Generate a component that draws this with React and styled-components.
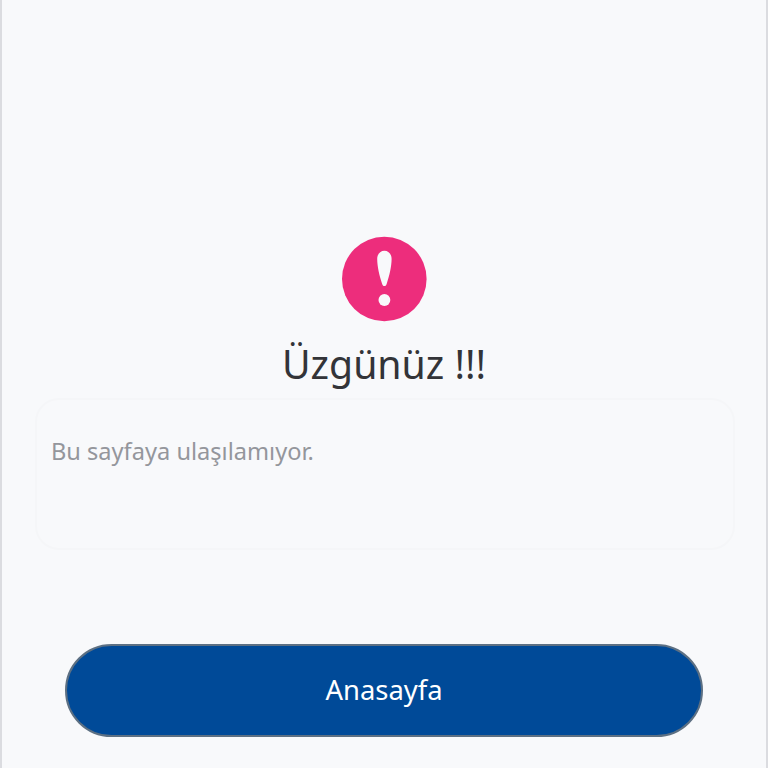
import React from "react";
import styled, { createGlobalStyle } from "styled-components";

const NotFound = () => {
  return (
    <>
      <GlobalStyle />
      <Container>
        <Icon viewBox="0 0 86 86">
          <circle cx="43.3" cy="43" r="42.3" fill="#ed2d7c" />
          <path
            d="M43.4 14.8C47.4 14.8 50.6 18 50.6 23C50.6 30.2 48.3 40.2 45.8 47.4C45.2 49.2 44.6 50 43.4 50C42.2 50 41.6 49.2 41 47.4C38.5 40.2 36.2 30.2 36.2 23C36.2 18 39.4 14.8 43.4 14.8Z"
            fill="#f8f9fb"
          />
          <circle cx="43.4" cy="64" r="5.9" fill="#f8f9fb" />
        </Icon>
        <Title>Üzgünüz !!!</Title>
        <MessageBox>
          <Message>Bu sayfaya ulaşılamıyor.</Message>
        </MessageBox>
        <HomeButton type="button">Anasayfa</HomeButton>
      </Container>
    </>
  );
};

export default NotFound;

const GlobalStyle = createGlobalStyle`
  * {
    box-sizing: border-box;
  }
  body {
    margin: 0;
    font-family: "Noto Sans", sans-serif;
    background: #f8f9fb;
  }
`;

const Container = styled.div`
  display: flex;
  flex-direction: column;
  align-items: center;
  height: 100vh;
  padding: 236px 32px 0;
  border-left: 2px solid #dbdce0;
  border-right: 2px solid #dbdce0;
  overflow: hidden;
`;

const Icon = styled.svg`
  flex: none;
  width: 86px;
  height: 86px;
`;

const Title = styled.h1`
  margin: 14px 0 0;
  color: #333438;
  font-size: 39.2px;
  font-weight: 400;
  line-height: 56px;
`;

const MessageBox = styled.div`
  flex: none;
  width: 700px;
  height: 152px;
  margin: 6px 0 0 2px;
  padding: 35px 14px;
  border: 2px solid #f5f6f8;
  border-radius: 24px;
`;

const Message = styled.p`
  margin: 0;
  color: #94969c;
  font-size: 23.6px;
  line-height: 32px;
`;

const HomeButton = styled.button`
  flex: none;
  width: 638px;
  height: 93px;
  margin-top: 94px;
  padding: 0 0 2px;
  border: 2px solid #5d7083;
  border-radius: 47px;
  background: #004a98;
  color: #fff;
  font-family: inherit;
  font-size: 27.4px;
`;
